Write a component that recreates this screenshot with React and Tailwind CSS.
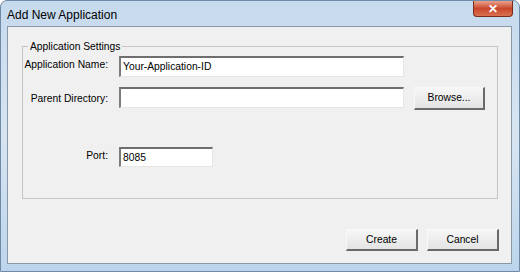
import React from 'react';

function TextBox({ value, className }) {
  return (
    <div
      className={`bg-white border-t-2 border-l-2 border-r border-b border-t-[#6e6e6e] border-l-[#7c7c7c] border-r-[#e6e6e6] border-b-[#e6e6e6] flex items-center pl-[2px] text-[10.3px] text-black ${className}`}
    >
      {value}
    </div>
  );
}

function Button({ label, className }) {
  return (
    <div
      className={`flex items-center justify-center bg-gradient-to-b from-[#f6f6f6] to-[#e4e4e4] border-t border-l border-t-[#f8f8f8] border-l-[#f8f8f8] border-r-2 border-b-2 border-r-[#6a6a6a] border-b-[#6a6a6a] text-[10.3px] text-black ${className}`}
    >
      {label}
    </div>
  );
}

export default function App() {
  return (
    <div className="w-[520px] h-[272px] flex flex-col rounded-t-[7px] border border-[#6f8aa6] bg-gradient-to-b from-[#c6daee] via-[#d7e5f2] to-[#bdd5ec] font-['Liberation_Sans',sans-serif] overflow-hidden">
      {/* title bar */}
      <div className="h-[25px] flex items-start justify-between pl-[6px] pr-[6px]">
        <span className="mt-[5px] text-[12px] text-black">Add New Application</span>
        <div className="w-[40px] h-[16px] rounded-b-[4px] border border-t-0 border-[#7b2b1b] bg-gradient-to-b from-[#e7a08b] via-[#c9462b] to-[#d9714f] flex items-center justify-center text-white text-[12px] font-bold leading-none">
          ✕
        </div>
      </div>

      {/* client area */}
      <div className="ml-[6px] w-[505px] h-[238px] border border-[#8a98a8] bg-[#f0f0f0] flex flex-col">
        {/* group box */}
        <div className="relative ml-[14px] mt-[19px] w-[476px] h-[153px] border border-[#c4c4c4] flex flex-col">
          <span className="absolute left-[5px] top-[-7px] px-[2px] bg-[#f0f0f0] text-[10.3px] leading-[13px] text-black whitespace-nowrap">
            Application Settings
          </span>

          <div className="mt-[9px] flex items-center h-[21px]">
            <span className="w-[85px] -mt-[3px] text-right text-[10.3px] text-black whitespace-nowrap">Application Name:</span>
            <TextBox value="Your-Application-ID" className="ml-[11px] w-[285px] h-[21px]" />
          </div>

          <div className="mt-[10px] flex items-start h-[22px]">
            <span className="w-[85px] mt-[4px] text-right text-[10.3px] text-black whitespace-nowrap">Parent Directory:</span>
            <TextBox value="" className="ml-[11px] w-[285px] h-[21px]" />
            <Button label="Browse..." className="ml-[10px] w-[71px] h-[23px]" />
          </div>

          <div className="mt-[38px] flex items-center h-[20px]">
            <span className="w-[85px] -mt-[2px] text-right text-[10.3px] text-black whitespace-nowrap">Port:</span>
            <TextBox value="8085" className="ml-[11px] w-[94px] h-[20px]" />
          </div>
        </div>

        {/* action buttons */}
        <div className="mt-[30px] flex justify-end gap-[9px] pr-[12px]">
          <Button label="Create" className="w-[72px] h-[22px]" />
          <Button label="Cancel" className="w-[72px] h-[22px]" />
        </div>
      </div>
    </div>
  );
}
